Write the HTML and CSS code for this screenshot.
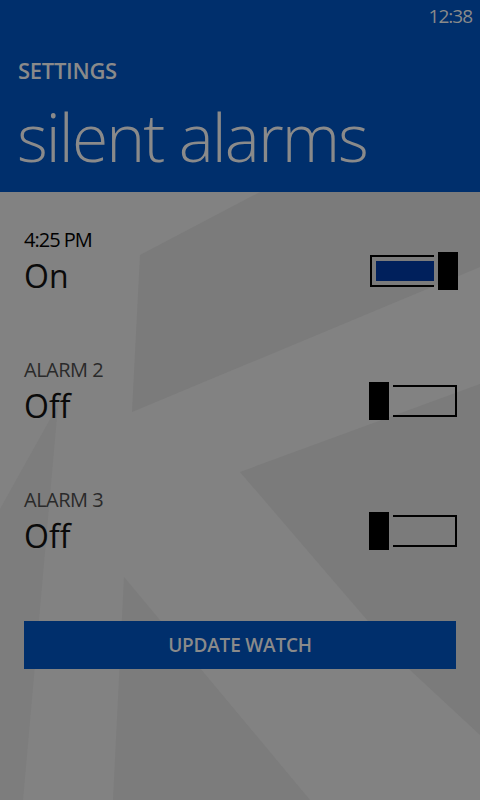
FILE: index.html
```html
<!DOCTYPE html>
<html lang="en">
<head>
  <meta charset="UTF-8">
  <meta name="viewport" content="width=device-width, initial-scale=1.0">
  <title>Silent Alarms</title>
  <link rel="stylesheet" href="styles.css">
</head>
<body>
  <div class="phone">
    <div class="header">
      <div class="status-bar">12:38</div>
      <div class="app-title">SETTINGS</div>
      <div class="page-title">silent alarms</div>
    </div>

    <div class="content">
      <!-- faint background pattern -->
      <svg class="backdrop" width="480" height="608" viewBox="0 0 480 608" aria-hidden="true">
        <rect width="480" height="608" fill="#828282"/>
        <polygon points="140,63 260,0 480,0 480,75 132,220" fill="#7b7b7b"/>
        <polygon points="240,280 480,192 480,543 410,478" fill="#7b7b7b"/>
        <polygon points="58,213 23,608 0,608 0,317" fill="#7d7d7d"/>
        <polygon points="124,385 310,608 113,608" fill="#7c7c7c"/>
      </svg>

      <div class="alarm-list">
        <div class="alarm-row">
          <div class="alarm-text">
            <div class="alarm-label time">4:25 PM</div>
            <div class="alarm-value">On</div>
          </div>
          <svg class="toggle" width="89" height="38" viewBox="0 0 89 38">
            <path d="M65 4 H2 V34 H65" fill="none" stroke="#000" stroke-width="2"/>
            <rect x="7" y="9" width="58" height="20" fill="#00205c"/>
            <rect x="69" y="0" width="20" height="38" fill="#000"/>
          </svg>
        </div>

        <div class="alarm-row">
          <div class="alarm-text">
            <div class="alarm-label">ALARM 2</div>
            <div class="alarm-value">Off</div>
          </div>
          <svg class="toggle" width="89" height="38" viewBox="0 0 89 38">
            <path d="M24 4 H87 V34 H24" fill="none" stroke="#000" stroke-width="2"/>
            <rect x="0" y="0" width="20" height="38" fill="#000"/>
          </svg>
        </div>

        <div class="alarm-row">
          <div class="alarm-text">
            <div class="alarm-label">ALARM 3</div>
            <div class="alarm-value">Off</div>
          </div>
          <svg class="toggle" width="89" height="38" viewBox="0 0 89 38">
            <path d="M24 4 H87 V34 H24" fill="none" stroke="#000" stroke-width="2"/>
            <rect x="0" y="0" width="20" height="38" fill="#000"/>
          </svg>
        </div>
      </div>

      <button class="button" id="update-watch">UPDATE WATCH</button>
    </div>
  </div>
</body>
</html>
```

FILE: styles.css
```css
/* Silent alarms page */
body {
  margin: 0;
  padding: 0;
  font-family: "Open Sans", "Liberation Sans", sans-serif;
  background-color: #828282;
}

.phone {
  width: 480px;
  height: 800px;
  overflow: hidden;
}

.header {
  box-sizing: border-box;
  height: 192px;
  padding: 1px 8px 0 18px;
  background-color: #002f6c;
  color: #8a8a8a;
}

.status-bar {
  font-size: 19px;
  line-height: 30px;
  letter-spacing: -1px;
  text-align: right;
}

.app-title {
  margin-top: 25px;
  font-size: 22px;
  line-height: 28px;
  font-weight: 600;
  letter-spacing: -0.3px;
}

.page-title {
  margin-top: 13px;
  margin-left: -1px;
  font-size: 66px;
  line-height: 78px;
  font-weight: 300;
  letter-spacing: -1.9px;
  white-space: nowrap;
}

.content {
  position: relative;
  isolation: isolate;
  box-sizing: border-box;
  height: 608px;
  padding: 36px 22px 0 24px;
}

.backdrop {
  position: absolute;
  top: 0;
  left: 0;
  z-index: -1;
}

.alarm-list {
  display: flex;
  flex-direction: column;
  gap: 62px;
}

.alarm-row {
  display: flex;
  justify-content: space-between;
  align-items: flex-start;
}

.alarm-label {
  font-size: 20px;
  line-height: 24px;
  letter-spacing: -0.5px;
  color: #2a2a2a;
}

.alarm-label.time {
  color: #000;
  letter-spacing: -1px;
}

.alarm-value {
  margin-top: 4px;
  font-size: 32px;
  line-height: 40px;
  color: #0a0a0a;
}

.toggle {
  display: block;
  margin-top: 24px;
}

.button {
  display: block;
  width: 432px;
  height: 48px;
  margin-top: 65px;
  padding: 0;
  border: none;
  background-color: #002f6c;
  color: #8a8a8a;
  font-family: inherit;
  font-size: 19px;
  font-weight: 600;
  letter-spacing: -0.2px;
  cursor: pointer;
}
```
